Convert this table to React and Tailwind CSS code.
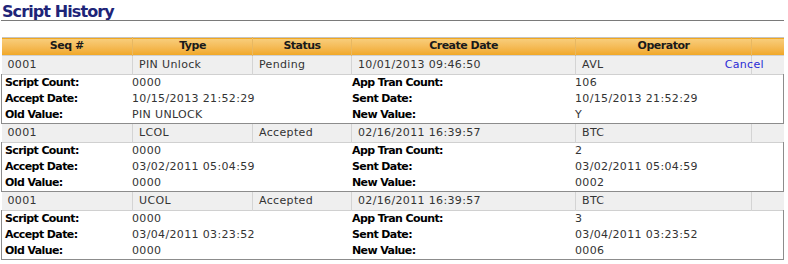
const rows = [
  {
    seq: "0001",
    type: "PIN Unlock",
    status: "Pending",
    created: "10/01/2013 09:46:50",
    operator: "AVL",
    cancel: true,
    scriptCount: "0000",
    appTranCount: "106",
    acceptDate: "10/15/2013 21:52:29",
    sentDate: "10/15/2013 21:52:29",
    oldValue: "PIN UNLOCK",
    newValue: "Y",
  },
  {
    seq: "0001",
    type: "LCOL",
    status: "Accepted",
    created: "02/16/2011 16:39:57",
    operator: "BTC",
    scriptCount: "0000",
    appTranCount: "2",
    acceptDate: "03/02/2011 05:04:59",
    sentDate: "03/02/2011 05:04:59",
    oldValue: "0000",
    newValue: "0002",
  },
  {
    seq: "0001",
    type: "UCOL",
    status: "Accepted",
    created: "02/16/2011 16:39:57",
    operator: "BTC",
    scriptCount: "0000",
    appTranCount: "3",
    acceptDate: "03/04/2011 03:23:52",
    sentDate: "03/04/2011 03:23:52",
    oldValue: "0000",
    newValue: "0006",
  },
];

const headers = ["Seq #", "Type", "Status", "Create Date", "Operator", ""];

function Detail({ label, value, label2, value2 }) {
  return (
    <div className="grid grid-cols-[130px_220px_223px_1fr] h-4 leading-4">
      <div className="pl-[3px] font-bold text-black tracking-[-0.6px]">{label}</div>
      <div className="text-[#333] tracking-[0.35px]">{value}</div>
      <div className="font-bold text-black tracking-[-0.6px]">{label2}</div>
      <div className="text-[#333] tracking-[0.35px]">{value2}</div>
    </div>
  );
}

export default function App() {
  return (
    <div className="w-[788px] h-[264px] bg-white font-['DejaVu_Sans',Verdana,sans-serif] text-[11px]">
      <div className="mx-[1px] pt-[3px] border-b border-[#7a7a7a] w-[783px] h-[21px]">
        <h1 className="text-[16px] leading-[17px] font-bold text-[#1e2478] pl-[1px] tracking-[-0.9px]">
          Script History
        </h1>
      </div>

      <table className="mt-[16px] ml-[1px] w-[782px] table-fixed border-collapse">
        <colgroup>
          <col className="w-[131px]" />
          <col className="w-[120px]" />
          <col className="w-[99px]" />
          <col className="w-[224px]" />
          <col className="w-[176px]" />
          <col className="w-[32px]" />
        </colgroup>
        <thead>
          <tr className="h-[18px] bg-gradient-to-b from-[#f8cd7a] to-[#f0a61a] border-t border-[#c4c4c4]">
            {headers.map((h, i) => (
              <th
                key={i}
                className="p-0 font-bold text-[#1a1a1a] text-center tracking-[-0.5px] border-l border-[#e8b862] first:border-l-0"
              >
                {h}
              </th>
            ))}
          </tr>
        </thead>
        <tbody>
          {rows.map((r, i) => (
            <RowGroup key={i} r={r} />
          ))}
        </tbody>
      </table>
    </div>
  );
}

function RowGroup({ r }) {
  const cell =
    "p-0 pl-[6px] text-[#333] tracking-[0.35px] border-l border-[#d4d4d4] first:border-l-0";
  return (
    <>
      <tr className="h-[19px] bg-[#efefef] border-y border-[#d0d0d0]">
        <td className={cell}>{r.seq}</td>
        <td className={cell}>{r.type}</td>
        <td className={cell}>{r.status}</td>
        <td className={cell}>{r.created}</td>
        <td className={cell + " overflow-visible"}>
          <div className="flex justify-between mr-[-13px] relative z-10">
            <span>{r.operator}</span>
            {r.cancel && <span className="text-[#2b2bd6]">Cancel</span>}
          </div>
        </td>
        <td className={cell}></td>
      </tr>
      <tr>
        <td colSpan={6} className="p-0 border-x border-b border-[#8c8c8c] border-t-0">
          <Detail label="Script Count:" value={r.scriptCount} label2="App Tran Count:" value2={r.appTranCount} />
          <Detail label="Accept Date:" value={r.acceptDate} label2="Sent Date:" value2={r.sentDate} />
          <Detail label="Old Value:" value={r.oldValue} label2="New Value:" value2={r.newValue} />
        </td>
      </tr>
    </>
  );
}
